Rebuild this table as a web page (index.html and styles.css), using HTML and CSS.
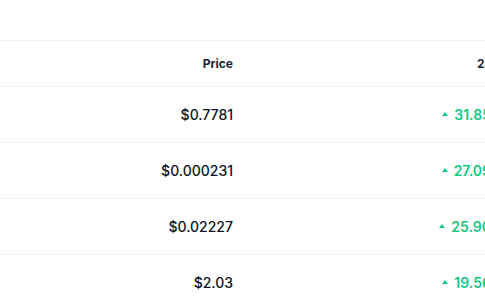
FILE: index.html
```html
<!DOCTYPE html>
<html>
<head>
<meta charset="utf-8">
<link rel="stylesheet" href="styles.css">
</head>
<body>
<div class="wrap">
  <div class="table">
    <div class="row head">
      <div class="cell first"></div>
      <div class="cell price">Price</div>
      <div class="cell change">24h %</div>
    </div>
    <div class="row">
      <div class="cell first"></div>
      <div class="cell price">$0.7781</div>
      <div class="cell change up"><span class="caret"></span>31.85%</div>
    </div>
    <div class="row">
      <div class="cell first"></div>
      <div class="cell price">$0.000231</div>
      <div class="cell change up"><span class="caret"></span>27.09%</div>
    </div>
    <div class="row">
      <div class="cell first"></div>
      <div class="cell price">$0.02227</div>
      <div class="cell change up"><span class="caret"></span>25.90%</div>
    </div>
    <div class="row">
      <div class="cell first"></div>
      <div class="cell price">$2.03</div>
      <div class="cell change up"><span class="caret"></span>19.56%</div>
    </div>
  </div>
</div>
</body>
</html>
```
FILE: styles.css
```css
html, body {
  margin: 0;
  padding: 0;
  background: #fff;
}
body {
  font-family: Inter, "Noto Sans", sans-serif;
  color: #0d1421;
  overflow: hidden;
}
.wrap {
  padding-top: 40px;
  width: 485px;
  overflow: hidden;
}
.table {
  width: 700px;
  border-top: 1px solid #eff2f5;
}
.row {
  display: grid;
  grid-template-columns: 90px 153px 272px 1fr;
  height: 56px;
  align-items: center;
  border-bottom: 1px solid #eff2f5;
  box-sizing: border-box;
  font-size: 14px;
}
.row.head {
  height: 46px;
  font-size: 12px;
  color: #222531;
}
.cell {
  text-align: right;
  padding-right: 10px;
}
.price {
  font-weight: 500;
}
.head .cell {
  font-weight: 700;
}
.head .change {
  padding-right: 0;
}
.change {
  display: flex;
  justify-content: flex-end;
  align-items: center;
}
.up {
  color: #16c784;
  font-weight: 600;
}
.caret {
  width: 0;
  height: 0;
  border-left: 3px solid transparent;
  border-right: 3px solid transparent;
  border-bottom: 4px solid #16c784;
  margin-right: 6px;
  margin-bottom: 1px;
}
```
